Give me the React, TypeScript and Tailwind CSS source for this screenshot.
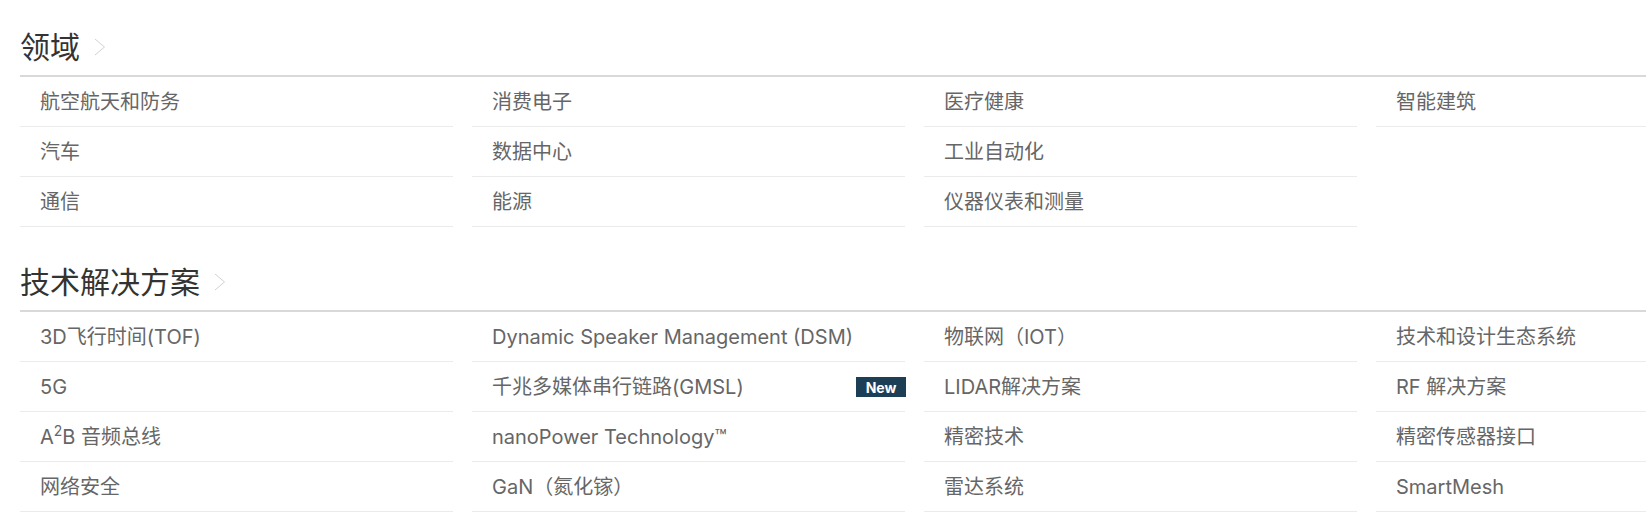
import React from 'react';

type Item = { label: React.ReactNode; badge?: string };

const fields: Item[][] = [
  [{ label: '航空航天和防务' }, { label: '汽车' }, { label: '通信' }],
  [{ label: '消费电子' }, { label: '数据中心' }, { label: '能源' }],
  [{ label: '医疗健康' }, { label: '工业自动化' }, { label: '仪器仪表和测量' }],
  [{ label: '智能建筑' }],
];

const solutions: Item[][] = [
  [
    { label: '3D飞行时间(TOF)' },
    { label: '5G' },
    {
      label: (
        <>
          A<sup className="text-[14px] -top-[8px]">2</sup>B 音频总线
        </>
      ),
    },
    { label: '网络安全' },
  ],
  [
    { label: 'Dynamic Speaker Management (DSM)' },
    { label: '千兆多媒体串行链路(GMSL)', badge: 'New' },
    { label: 'nanoPower Technology™' },
    { label: 'GaN（氮化镓）' },
  ],
  [
    { label: '物联网（IOT）' },
    { label: 'LIDAR解决方案' },
    { label: '精密技术' },
    { label: '雷达系统' },
  ],
  [
    { label: '技术和设计生态系统' },
    { label: 'RF 解决方案' },
    { label: '精密传感器接口' },
    { label: 'SmartMesh' },
  ],
];

function Chevron() {
  return (
    <svg width="12" height="18" viewBox="0 0 12 18" className="ml-[14px]">
      <polyline points="1,1 10.5,9 1,17" fill="none" stroke="#d2d2d2" strokeWidth="1" />
    </svg>
  );
}

function Section({ title, columns, className = '' }: { title: string; columns: Item[][]; className?: string }) {
  return (
    <section className={className}>
      {/* Title */}
      <div className="h-[77px] flex items-end border-b-2 border-[#d9d9d9] pb-[8px]">
        <div className="flex items-center">
          <h2 className="text-[30px] leading-[40px] text-[#333] font-normal">{title}</h2>
          <Chevron />
        </div>
      </div>

      {/* Link columns */}
      <div className="flex gap-[19px]">
        {columns.map((col, i) => (
          <ul key={i} className="w-[433px] shrink-0">
            {col.map((item, j) => (
              <li
                key={j}
                className="h-[50px] border-b border-[#ebebeb] flex items-center justify-between pl-[20px] pt-[1px] text-[20px] text-[#666]"
              >
                <span>{item.label}</span>
                {item.badge && (
                  <span className="h-[20px] w-[50px] flex items-center justify-center bg-[#1d3f56] text-white text-[14px] font-bold mr-[-1px]">
                    {item.badge}
                  </span>
                )}
              </li>
            ))}
          </ul>
        ))}
      </div>
    </section>
  );
}

export default function App() {
  return (
    <div
      className="w-full overflow-hidden bg-white min-h-[524px]"
      style={{ fontFamily: 'Inter, "Noto Sans CJK SC", sans-serif' }}
    >
      <div className="w-max pl-[20px]">
        <Section title="领域" columns={fields} />
        <Section title="技术解决方案" columns={solutions} className="mt-[8px]" />
      </div>
    </div>
  );
}
